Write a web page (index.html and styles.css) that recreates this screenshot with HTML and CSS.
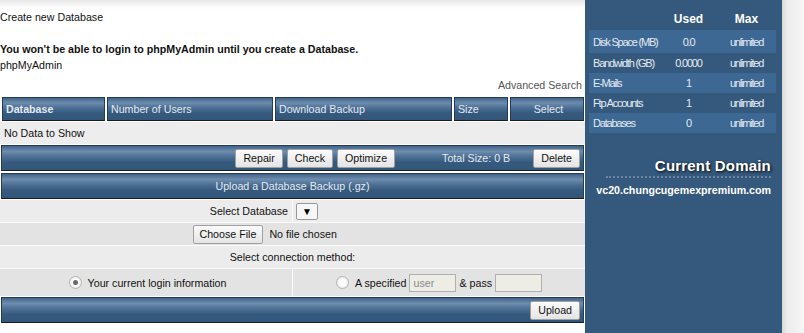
FILE: index.html
```html
<!DOCTYPE html>
<html lang="en">
<head>
<meta charset="UTF-8" />
<title>MySQL Databases</title>
<link rel="stylesheet" href="styles.css">
</head>
<body>

<div class="page">
  <div class="main">
    <p class="line">Create new Database</p>
    <p class="line warn">You won't be able to login to phpMyAdmin until you create a Database.</p>
    <p class="line">phpMyAdmin</p>
    <p class="adv">Advanced Search</p>

    <div class="thead">
      <div class="th bold">Database</div>
      <div class="th">Number of Users</div>
      <div class="th">Download Backup</div>
      <div class="th">Size</div>
      <div class="th center">Select</div>
    </div>
    <div class="nodata">No Data to Show</div>

    <div class="bar actions">
      <button class="btn">Repair</button>
      <button class="btn">Check</button>
      <button class="btn">Optimize</button>
      <span class="total">Total Size: 0 B</span>
      <button class="btn">Delete</button>
    </div>

    <div class="bar title">Upload a Database Backup (.gz)</div>

    <div class="row split light">
      <div class="cell right">Select Database</div>
      <div class="cell"><span class="select">&#9660;</span></div>
    </div>
    <div class="row dark">
      <div class="file">
        <button class="btn narrow">Choose File</button>
        <span class="nofile">No file chosen</span>
      </div>
    </div>
    <div class="row light">Select connection method:</div>
    <div class="row split dark tall">
      <div class="cell center"><span class="radio on"></span>Your current login information</div>
      <div class="cell center"><span class="radio"></span>A specified <span class="field">user</span> &amp; pass <span class="field"></span></div>
    </div>

    <div class="bar upload">
      <button class="btn">Upload</button>
    </div>
  </div>

  <div class="sidebar">
    <table class="stats">
      <tr class="head"><th></th><th>Used</th><th>Max</th></tr>
      <tr class="alt first"><td>Disk Space (MB)</td><td>0.0</td><td>unlimited</td></tr>
      <tr><td>Bandwidth (GB)</td><td>0.0000</td><td>unlimited</td></tr>
      <tr class="alt"><td>E-Mails</td><td>1</td><td>unlimited</td></tr>
      <tr><td>Ftp Accounts</td><td>1</td><td>unlimited</td></tr>
      <tr class="alt"><td>Databases</td><td>0</td><td>unlimited</td></tr>
    </table>

    <h3 class="domain-title">Current Domain</h3>
    <div class="domain">vc20.chungcugemexpremium.com</div>
  </div>

  <div class="gutter"></div>
</div>

</body>
</html>
```

FILE: styles.css
```css
body {
  margin: 0;
  font-family: "Liberation Sans", Arial, sans-serif;
  font-size: 8pt;
  color: #111;
  background: #fff;
}
.page {
  display: flex;
  height: 333px;
  overflow: hidden;
}
.main {
  width: 585px;
  padding-top: 9px;
  background: linear-gradient(to bottom, #e6e6e6 0, #fbfbfb 6px, #fff 10px);
}
.line {
  margin: 0;
  line-height: 16px;
}
.warn {
  margin-top: 16px;
  font-weight: bold;
}
.adv {
  margin: 4px 3px 4px 0;
  line-height: 16px;
  text-align: right;
  color: #555;
}

/* barras azules */
.th, .bar {
  background: linear-gradient(to bottom, #3f6389 0, #6e8dad 22%, #4c6f94 45%, #36597e 68%, #33577b 100%);
  border: 1px solid #253c53;
  border-bottom-color: #1c1c1c;
  color: #e3eaf1;
}
.thead {
  display: grid;
  grid-template-columns: 103px 166px 177px 54px 1fr;
  gap: 2px;
  padding: 0 1px 0 2px;
}
.th {
  height: 22px;
  line-height: 22px;
  padding-left: 3px;
}
.bold {
  font-weight: bold;
}
.center {
  text-align: center;
}
.nodata {
  margin-top: 1px;
  height: 22px;
  line-height: 22px;
  padding-left: 4px;
  background: #ededed;
}
.bar {
  margin: 1px 1px 0 1px;
  height: 24px;
  display: flex;
  align-items: center;
}
.actions {
  justify-content: flex-end;
  padding-right: 3px;
  gap: 4px;
}
.total {
  margin: 0 19px 0 43px;
}
.title {
  margin-top: 2px;
  justify-content: center;
}
.upload {
  justify-content: flex-end;
  padding-right: 3px;
}
.btn {
  font-family: "Liberation Sans", Arial, sans-serif;
  font-size: 8pt;
  color: #111;
  height: 19px;
  padding: 0 7px;
  margin: 0;
  border: 1px solid #a0a0a0;
  border-radius: 2px;
  background: linear-gradient(to bottom, #fbfbfb, #e4e4e4);
}
.btn.narrow {
  padding: 0 6px;
}

/* filas del formulario */
.row {
  margin-top: 1px;
  height: 22px;
  display: flex;
  align-items: center;
  justify-content: center;
}
.light {
  background: #ececec;
}
.dark {
  background: #e3e3e3;
}
.tall {
  height: 27px;
}
.row + .row {
  border-top: 1px solid #fafafa;
  margin-top: 0;
}
.split {
  display: grid;
  grid-template-columns: 292px 1fr;
}
.cell {
  height: 100%;
  display: flex;
  align-items: center;
  padding-left: 3px;
}
.cell + .cell {
  border-left: 1px solid #fafafa;
}
.cell.right {
  justify-content: flex-end;
  padding-right: 4px;
}
.cell.center {
  justify-content: center;
}
.select {
  width: 20px;
  height: 15px;
  border: 1px solid #999;
  border-radius: 2px;
  background: #f6f6f6;
  font-size: 10px;
  line-height: 15px;
  text-align: center;
  color: #000;
}
.file {
  width: 200px;
  display: flex;
  align-items: center;
  gap: 6px;
}
.radio {
  display: inline-block;
  width: 11px;
  height: 11px;
  border-radius: 50%;
  border: 1px solid #b5b5b5;
  background: radial-gradient(circle, #fdfdfd 40%, #dcdcdc 100%);
  margin-right: 6px;
  position: relative;
}
.radio.on::after {
  content: "";
  position: absolute;
  left: 3px;
  top: 3px;
  width: 5px;
  height: 5px;
  border-radius: 50%;
  background: #6a6a6a;
}
.field {
  display: inline-block;
  width: 42px;
  height: 16px;
  line-height: 16px;
  padding-left: 3px;
  margin: 0 3px 0 3px;
  border: 1px solid #b0b0b0;
  background: #ededE6;
  color: #8a8a8a;
  text-align: left;
}

/* lateral */
.sidebar {
  width: 197px;
  background: #35597d;
  color: #e3eaf1;
  padding: 8px 5px 0 4px;
  box-sizing: border-box;
}
.stats {
  width: 187px;
  table-layout: fixed;
  border-collapse: collapse;
}
.stats th {
  height: 22px;
  padding: 0;
  font-size: 12px;
  font-weight: bold;
  color: #fff;
  text-align: center;
}
.stats th:nth-child(1) {
  width: 71px;
}
.stats th:nth-child(2) {
  width: 57px;
}
.stats td {
  height: 20px;
  padding: 0;
  font-size: 11px;
  letter-spacing: -1.2px;
  text-align: center;
  white-space: nowrap;
}
.stats td:first-child {
  text-align: left;
  padding-left: 4px;
}
.stats tr.first td {
  height: 23px;
}
.stats tr.alt td {
  background: #3d6894;
}
.domain-title {
  margin: 24px 6px 0 17px;
  padding-bottom: 2px;
  text-align: right;
  font-size: 15px;
  color: #fff;
  letter-spacing: 0.2px;
  text-shadow: 1px 1px 3px #000;
  border-bottom: 2px dotted #6c87a3;
}
.domain {
  margin-top: 6px;
  text-align: right;
  padding-right: 6px;
  font-weight: bold;
  color: #fff;
}
.gutter {
  flex: 1;
  background: linear-gradient(to right, #d8d8d8 0, #ececec 5px, #f6f6f6 100%);
}
```
